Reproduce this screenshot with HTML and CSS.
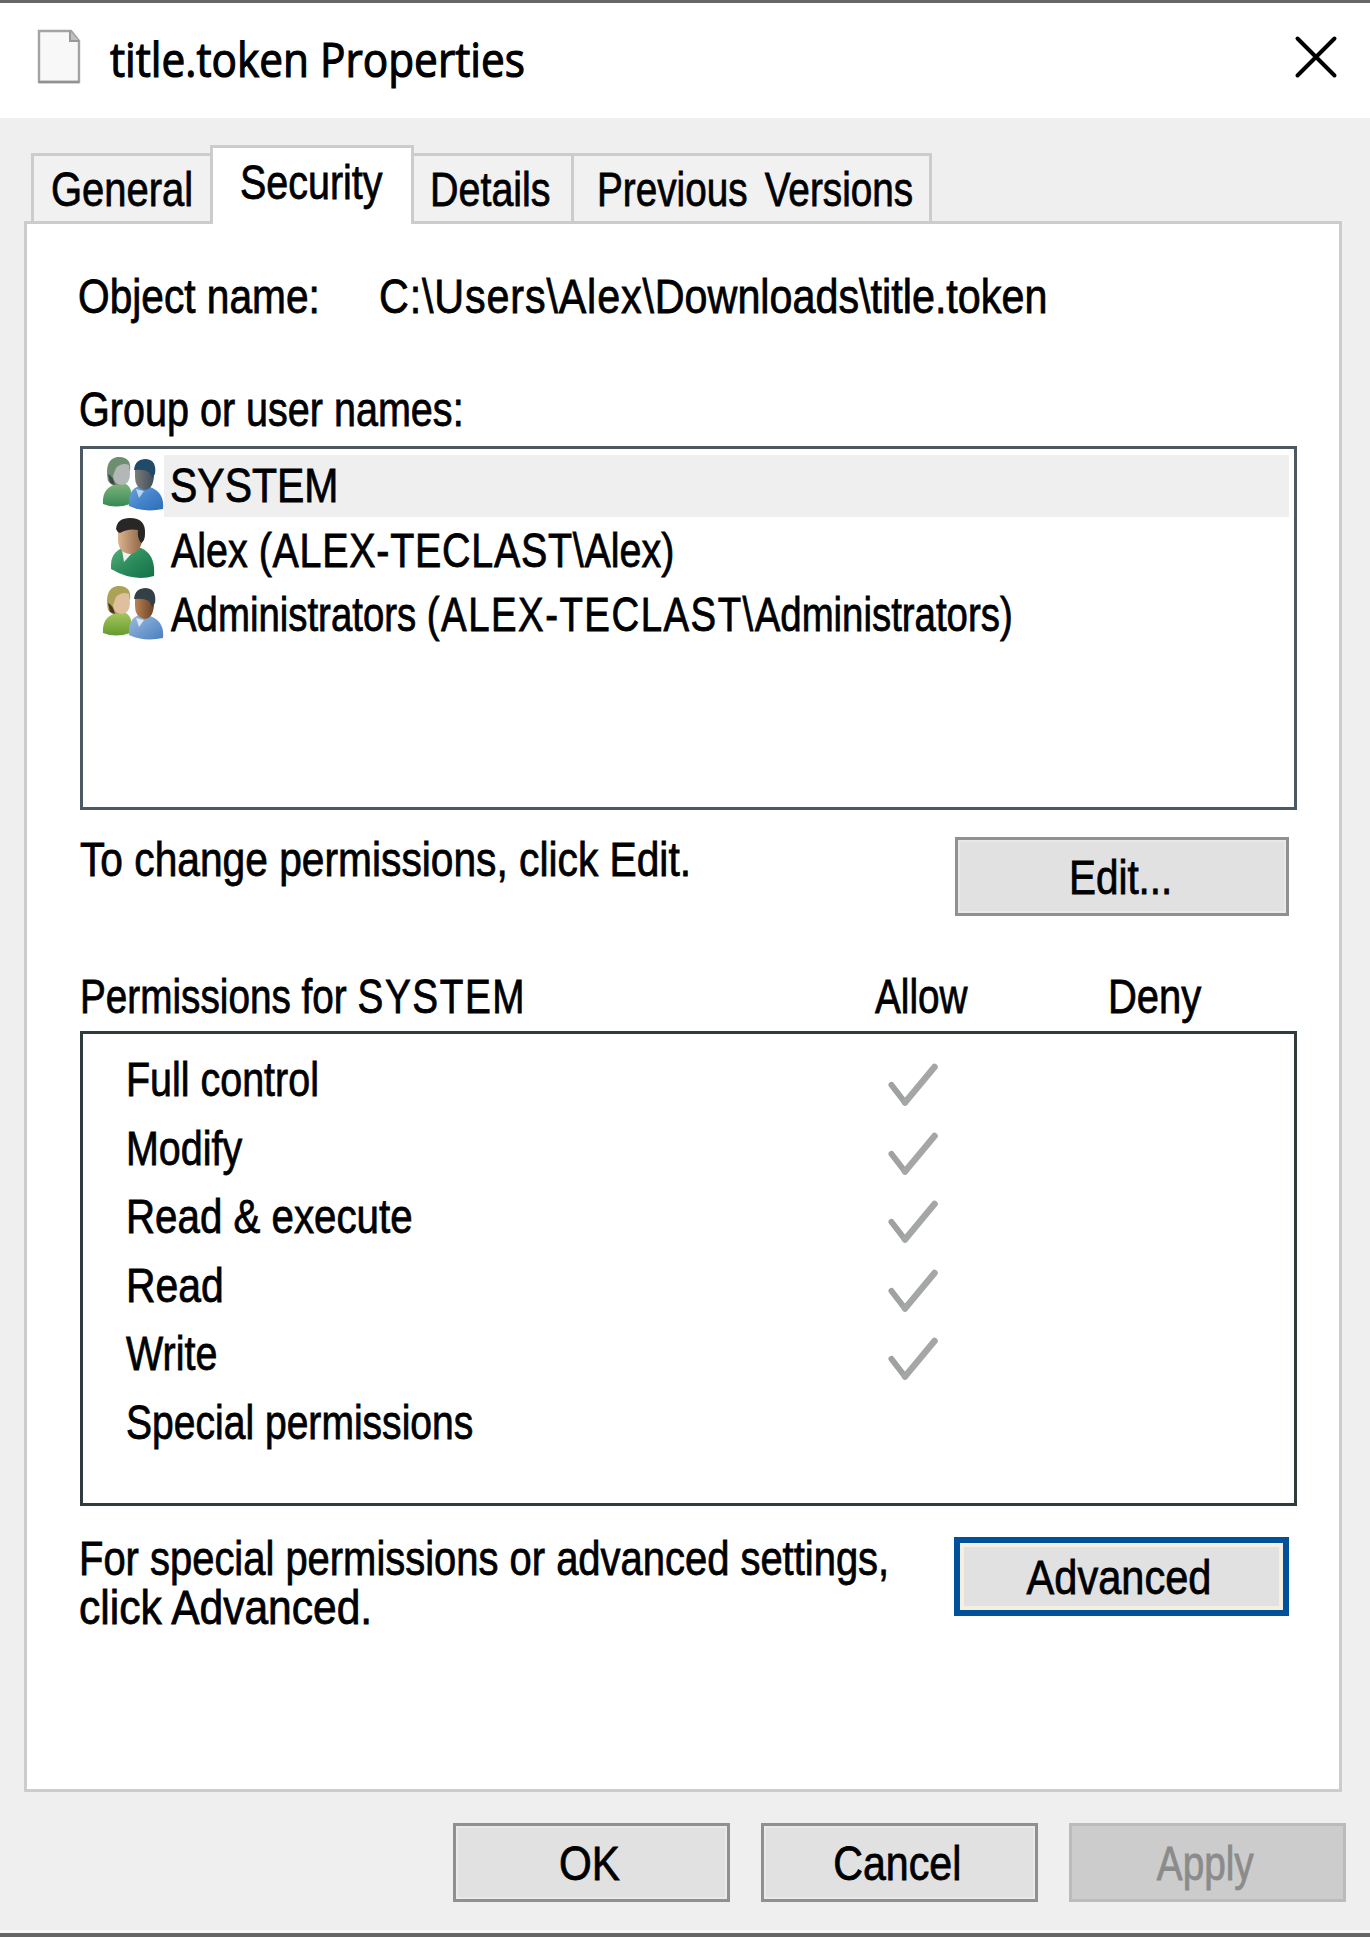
FILE: index.html
```html
<!DOCTYPE html>
<html lang="en">
<head>
<meta charset="utf-8">
<title>title.token Properties</title>
<link rel="stylesheet" href="styles.css">
</head>
<body>
<svg width="0" height="0" class="defs">
  <defs>
    <linearGradient id="blue" x1="0" y1="0" x2="1" y2="1"><stop offset="0" stop-color="#6fa3da"/><stop offset=".5" stop-color="#4584cc"/><stop offset="1" stop-color="#2c6db8"/></linearGradient>
    <linearGradient id="paleblue" x1="0" y1="0" x2="1" y2="1"><stop offset="0" stop-color="#9dbbdf"/><stop offset="1" stop-color="#4a7fc0"/></linearGradient>
    <linearGradient id="green" x1="0" y1="0" x2="1" y2="1"><stop offset="0" stop-color="#5fae7c"/><stop offset=".5" stop-color="#2b8c5c"/><stop offset="1" stop-color="#14704a"/></linearGradient>
    <linearGradient id="softgreen" x1="0" y1="0" x2="0" y2="1"><stop offset="0" stop-color="#7fb27c"/><stop offset="1" stop-color="#358a55"/></linearGradient>
    <linearGradient id="lime" x1="0" y1="0" x2="0" y2="1"><stop offset="0" stop-color="#a5c65c"/><stop offset="1" stop-color="#649b30"/></linearGradient>
    <linearGradient id="brown" x1="0" y1="0" x2="1" y2="0"><stop offset="0" stop-color="#b88254"/><stop offset="1" stop-color="#6b4126"/></linearGradient>
    <linearGradient id="skin" x1="0" y1="0" x2="1" y2="0"><stop offset="0" stop-color="#dcb48e"/><stop offset="1" stop-color="#8c6244"/></linearGradient>
    <linearGradient id="slate" x1="0" y1="0" x2="1" y2="0"><stop offset="0" stop-color="#7c7b78"/><stop offset="1" stop-color="#3d4e5c"/></linearGradient>
    <symbol id="check" viewBox="0 0 50 46"><path d="M3.5 23 17 40.5" fill="none" stroke="#a0a2a2" stroke-width="6" stroke-linecap="round"/><path d="M17 40.5 46.5 5" fill="none" stroke="#a5a7a7" stroke-width="6.6" stroke-linecap="round"/></symbol>
  </defs>
</svg>

<header class="titlebar">
  <svg class="file-icon" width="44" height="56" viewBox="0 0 44 56"><path d="M2 2H34L42 12V53H2Z" fill="#f8f8f8" stroke="#a2a4a2" stroke-width="2.4"/><path d="M33 2V12H42" fill="#bfc1bf" stroke="#989a98" stroke-width="2"/><path d="M2 53H42" stroke="#909290" stroke-width="2.6"/></svg>
  <h1 class="t title">title.token Properties</h1>
  <svg class="close" width="44" height="44" viewBox="0 0 44 44"><path d="M3.5 3.5 40.5 40.5M40.5 3.5 3.5 40.5" stroke="#000" stroke-width="4" stroke-linecap="round"/></svg>
</header>

<nav class="tabs">
  <div class="tab general"><span class="t">General</span></div>
  <div class="tab active"><span class="t">Security</span></div>
  <div class="tab details"><span class="t">Details</span></div>
  <div class="tab versions"><span class="t">Previous Versions</span></div>
</nav>

<main class="panel">
  <div class="object">
    <span class="t object-label">Object name:</span>
    <span class="t object-path"><span class="loose">C:\Users\Alex\</span>Downloads\title.token</span>
  </div>

  <div class="group-label"><span class="t">Group or user names:</span></div>
  <div class="users">
    <div class="user">
      <div class="user-icon"><svg width="62" height="55" viewBox="0 0 62 55">
        <path d="M1 48C0 34 8 30 14 28L24 28C30 31 31 42 28 48Q14 53 1 48Z" fill="url(#softgreen)"/>
        <path d="M6 25C3 10 7 1 17 1C27 1 29 8 28 14L20 29H10Z" fill="#6d8f70"/>
        <path d="M14 12Q20 6 27 9L28 18Q28 28 20 29Q12 29 11 20Z" fill="#b3b8b6"/>
        <path d="M6 18Q11 20 13 29L8 27Z" fill="#3d4a48"/>
        <path d="M27 50C26 36 32 31 38 30L48 31C59 35 62 43 61 53Q42 57 27 50Z" fill="url(#blue)"/>
        <path d="M34 33 37 42 42 35Z" fill="#b9d7ef"/>
        <path d="M33 12Q41 6 50 10L52 20Q51 34 42 34Q33 32 33 21Z" fill="url(#slate)"/>
        <path d="M32 14Q33 3 44 3Q55 4 53 18L50 22Q49 12 32 14Z" fill="#214a68"/></svg></div>
      <div class="user-name selected"><span class="t name-system">SYSTEM</span></div>
    </div>
    <div class="user">
      <div class="user-icon single"><svg width="46" height="62" viewBox="0 0 46 62">
        <path d="M1 48C1 36 9 32 16 29L31 31C42 36 45 46 44 59Q23 65 1 52Z" fill="url(#green)"/>
        <path d="M12 33 14 45 22 36Z" fill="#eef3f0"/>
        <path d="M8 12Q18 5 31 10L33 20Q31 36 20 37Q9 36 8 24Z" fill="url(#skin)"/>
        <path d="M6 12Q7 1 20 1Q36 1 35 17Q35 24 31 26Q27 21 28 13Q18 11 10 16Q7 15 6 12Z" fill="#282726"/></svg></div>
      <div class="user-name"><span class="t name-alex">Alex <span class="loose">(ALEX-TECLAST\</span>Alex)</span></div>
    </div>
    <div class="user">
      <div class="user-icon"><svg width="62" height="55" viewBox="0 0 62 55">
        <path d="M1 48C0 34 8 30 14 28L24 28C30 31 31 42 28 48Q14 53 1 48Z" fill="url(#lime)"/>
        <path d="M6 25C3 10 7 1 17 1C27 1 29 8 28 14L20 29H10Z" fill="#aaa254"/>
        <path d="M14 12Q20 6 27 9L28 18Q28 28 20 29Q12 29 11 20Z" fill="#e0bf9e"/>
        <path d="M6 18Q11 20 13 29L8 27Z" fill="#4a3420"/>
        <path d="M27 50C26 36 32 31 38 30L48 31C59 35 62 43 61 53Q42 57 27 50Z" fill="url(#paleblue)"/>
        <path d="M34 33 37 42 42 35Z" fill="#dbe7f3"/>
        <path d="M33 12Q41 6 50 10L52 20Q51 34 42 34Q33 32 33 21Z" fill="url(#brown)"/>
        <path d="M32 14Q33 3 44 3Q55 4 53 18L50 22Q49 12 32 14Z" fill="#343f46"/></svg></div>
      <div class="user-name"><span class="t name-admins">Administrators <span class="loose">(ALEX-TECLAST\</span>Administrators)</span></div>
    </div>
  </div>

  <div class="edit-row">
    <span class="t edit-hint">To change permissions, click Edit.</span>
    <button class="btn edit"><span class="t">Edit...</span></button>
  </div>

  <div class="perm-head">
    <span class="t head-name">Permissions for <span class="loose">SYSTEM</span></span>
    <span class="t head-allow">Allow</span>
    <span class="t head-deny">Deny</span>
  </div>
  <div class="perms">
    <div class="perm"><span class="t p-full">Full control</span><svg class="check"><use href="#check"/></svg></div>
    <div class="perm"><span class="t p-modify">Modify</span><svg class="check"><use href="#check"/></svg></div>
    <div class="perm"><span class="t p-execute">Read &amp; execute</span><svg class="check"><use href="#check"/></svg></div>
    <div class="perm"><span class="t p-read">Read</span><svg class="check"><use href="#check"/></svg></div>
    <div class="perm"><span class="t p-write">Write</span><svg class="check"><use href="#check"/></svg></div>
    <div class="perm"><span class="t p-special">Special permissions</span></div>
  </div>

  <div class="adv-row">
    <div class="adv-hint">
      <span class="t hint-one">For special permissions or advanced settings,</span>
      <span class="t hint-two">click Advanced.</span>
    </div>
    <button class="btn advanced"><span class="t">Advanced</span></button>
  </div>
</main>

<footer class="actions">
  <button class="btn ok"><span class="t">OK</span></button>
  <button class="btn cancel"><span class="t">Cancel</span></button>
  <button class="btn apply" disabled><span class="t">Apply</span></button>
</footer>
</body>
</html>
```
FILE: styles.css
```css
* { box-sizing: border-box; }
body {
  margin: 0;
  width: 1370px;
  height: 1937px;
  overflow: hidden;
  display: flex;
  flex-direction: column;
  background: #efefef;
  border-top: 3px solid #666;
  border-bottom: 4px solid #666;
  font: 49px/56px "Liberation Sans", Arial, sans-serif;
  color: #000;
}
.defs { position: absolute; }

/* Condensed dialog lettering: --k is the horizontal squeeze of each label */
.t {
  display: block;
  white-space: pre;
  transform: scaleX(var(--k, .82));
  transform-origin: 0 50%;
  -webkit-text-stroke: .8px currentColor;
}

.titlebar { display: flex; height: 115px; flex: none; background: #fff; padding-left: 37px; }
.file-icon { margin-top: 26px; flex: none; }
.title {
  --k: .882;
  margin: 23px 0 0 29px;
  font: 48px/66px "Open Sans", sans-serif;
  -webkit-text-stroke-width: 1.2px;
  width: 1184px;
}
.close { margin-top: 32px; flex: none; }

.tabs { display: flex; align-items: flex-end; height: 103px; flex: none; padding-left: 31px; }
.tab { height: 68px; border-top: 3px solid #ccc; padding-top: 5px; background: #f1f1f1; }
.tab.general { --k: .815; width: 179px; border-left: 3px solid #ccc; padding-left: 17px; }
.tab.active {
  --k: .805;
  position: relative;
  width: 204px;
  height: 79px;
  margin-bottom: -3px;
  padding: 6px 0 0 27px;
  border: 3px solid #ccc;
  border-bottom: 0;
  background: #fff;
}
.tab.details { --k: .805; width: 160px; border-right: 3px solid #ccc; padding-left: 16px; }
.tab.versions { --k: .79; width: 358px; border-right: 3px solid #ccc; padding-left: 23px; word-spacing: 8px; }

.panel {
  flex: none;
  width: 1318px;
  height: 1571px;
  margin-left: 24px;
  padding: 44px 0 0 53px;
  border: 3px solid #ccc;
  background: #fff;
}
.object { display: grid; grid-template-columns: 301px 1fr; margin-left: -2px; }
.object-label { --k: .83; }
.object-path { --k: .843; }
.object-path .loose { letter-spacing: 1px; }
.group-label { --k: .807; margin: 57px 0 0 -1px; }

.users { width: 1217px; height: 364px; margin-top: 9px; border: 3px solid #4a5964; padding: 6px 5px 0 0; }
.user { display: flex; height: 64.5px; }
.user-icon { width: 81px; padding: 1px 0 0 19px; flex: none; }
.user-icon.single { padding-left: 27px; margin-top: -4px; }
.user-icon svg { display: block; }
.user-name { flex: 1; height: 62px; padding: 2px 0 0 7px; }
.user-name.selected { background: #efefef; padding-left: 6px; }
.name-system { --k: .836; }
.name-alex { --k: .805; }
.name-alex .loose { letter-spacing: .9px; }
.name-admins { --k: .783; }
.name-admins .loose { letter-spacing: 1.9px; }

.edit-row { display: flex; justify-content: space-between; width: 1217px; padding-right: 8px; height: 106px; }
.edit-hint { --k: .831; margin-top: 21px; }
.btn {
  flex: none;
  display: flex;
  align-items: center;
  justify-content: center;
  height: 79px;
  padding: 1px 4px 0 0;
  border: 3px solid #909090;
  border-radius: 0;
  background: #e1e1e1;
  box-shadow: inset 0 0 0 2px #e9e9e9;
  font: inherit;
  color: #000;
}
.btn .t { transform-origin: 50% 50%; }
.btn.edit { --k: .825; width: 334px; margin-top: 27px; padding-right: 2px; }

.perm-head { display: grid; grid-template-columns: 795px 232px 1fr; margin-top: 52px; }
.head-name { --k: .79; }
.head-name .loose { letter-spacing: 2px; }
.head-allow { --k: .79; }
.head-deny { --k: .815; margin-left: 1px; }
.perms { width: 1217px; height: 475px; margin-top: 7px; border: 3px solid #2f3c3d; padding: 10px 0 0 42px; }
.perm { display: grid; grid-template-columns: 763px 1fr; height: 68.55px; padding-top: 7px; }
.check { width: 50px; height: 46px; margin-top: 11px; }
.perm .t { margin-left: 1px; }
.p-full, .p-modify { --k: .805; }
.p-execute { --k: .822; }
.p-read { --k: .835; }
.p-write { --k: .805; }
.p-special { --k: .797; }

.adv-row { display: flex; justify-content: space-between; width: 1217px; padding-right: 8px; }
.adv-hint { margin: 28px 0 0 -1px; line-height: 49px; width: 860px; }
.hint-one { --k: .815; }
.hint-two { --k: .868; }
.btn.advanced {
  --k: .848;
  width: 335px;
  height: 79px;
  margin-top: 31px;
  padding-right: 6px;
  border: 6px solid #00519c;
  box-shadow: inset 0 0 0 4px #f6eedf;
}

.actions { display: flex; justify-content: flex-end; gap: 31px; flex: 1; padding: 31px 24px 0 0; border-bottom: 3px solid #f8f8f8; }
.actions .btn { width: 277px; }
.ok { --k: .86; }
.cancel { --k: .84; }
.btn.apply { --k: .79; color: #8b8b8b; background: #ccc; border-color: #bbb; box-shadow: none; }
```
